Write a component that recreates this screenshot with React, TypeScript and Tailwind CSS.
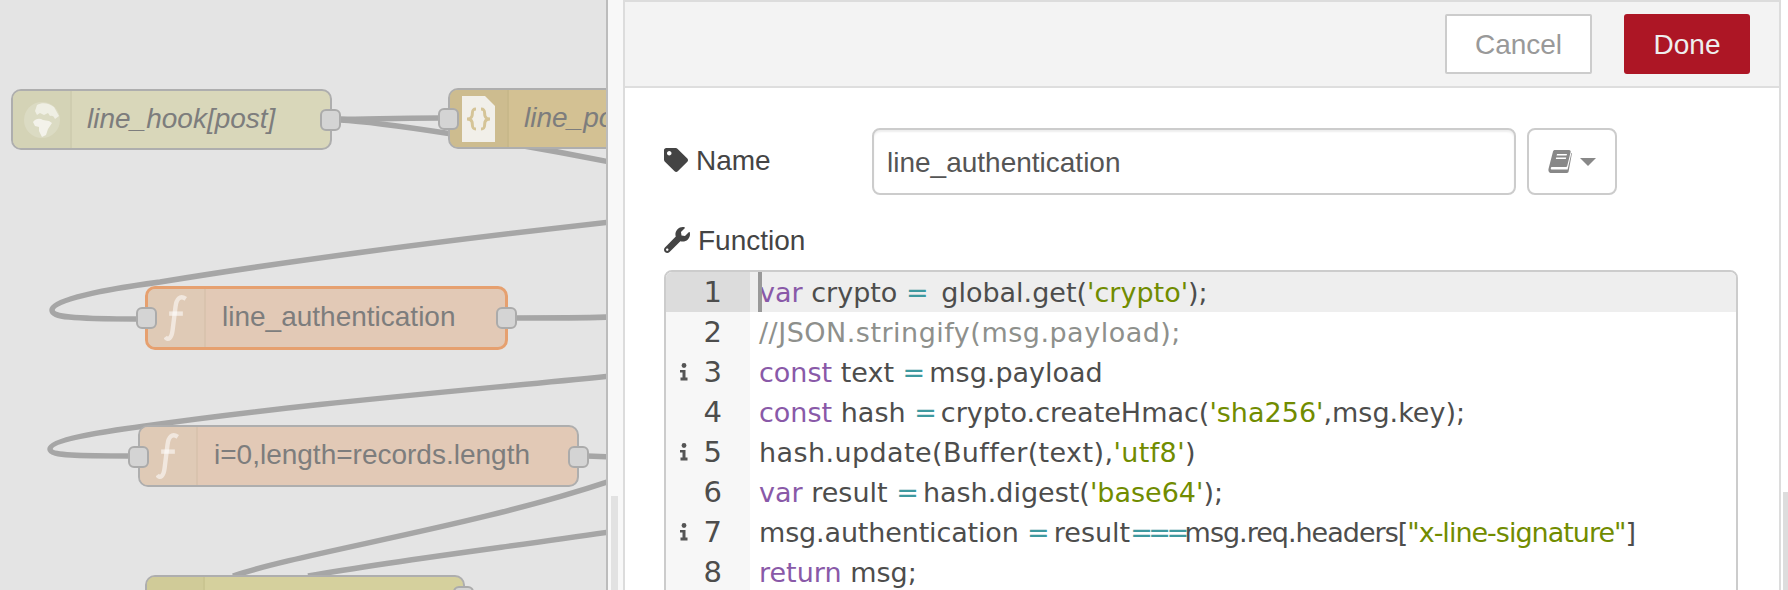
import { FaTag, FaWrench } from 'react-icons/fa'
import type { ReactNode } from 'react'

const SANS = "font-['Liberation_Sans',Arial,sans-serif]"

type Tok = [string, string?]

const KW = 'text-[#8959a8]'
const OP = 'text-[#3e999f] tracking-[-4.5px]'
const STR = 'text-[#718c00]'
const CMT = 'text-[#8e908c]'

const lines: { toks: Tok[]; info?: boolean; fit?: string }[] = [
  { toks: [['var', KW], [' crypto '], ['=', OP], ['  global.get('], ["'crypto'", STR], [');']] },
  { fit: 'tracking-[0.5px]', toks: [['//JSON.stringify(msg.payload);', CMT]] },
  { info: true, toks: [['const', KW], [' text '], ['=', OP], [' msg.payload']] },
  { toks: [['const', KW], [' hash '], ['=', OP], [' crypto.createHmac('], ["'sha256'", STR], [',msg.key);']] },
  { info: true, fit: 'tracking-[0.4px]', toks: [['hash.update(Buffer(text),'], ["'utf8'", STR], [')']] },
  { toks: [['var', KW], [' result '], ['=', OP], [' hash.digest('], ["'base64'", STR], [');']] },
  { info: true, toks: [['msg.authentication ', 'tracking-[-0.15px]'], ['=', OP], [' result'], ['===', OP], ['msg.req.headers[', 'tracking-[-1px]'], ['"x-line-signature"', `${STR} tracking-[-1px]`], [']']] },
  { toks: [['return', KW], [' msg;']] },
]

const FuncIcon = ({ className }: { className: string }) => (
  <svg viewBox="0 0 24 48" className={className} fill="none" stroke="#fff" strokeOpacity="0.55" strokeWidth="4.5">
    <path d="M22 4 C16 0 12.5 4 11.5 12 L8.5 36 C7.5 44 4 47 1 43" />
    <path d="M5 19 H19" />
  </svg>
)

const GlobeIcon = () => (
  <svg viewBox="0 0 36 36" className="w-[36px] h-[36px] blur-[0.5px]">
    <circle cx="18" cy="18" r="18" fill="#fff" fillOpacity="0.18" />
    <path d="M13 3 C18 0 25 1 30 5 L35 14 L31 17 C30 14 28 13 26 14 L24 11 L20 13 L16 11 L13 13 L11 9 Z" fill="#fff" fillOpacity="0.55" />
    <path d="M9 20 C12 16 16 16 19 18 L25 19 L28 21 L24 27 L22 33 L18 35 L15 29 L15 25 L11 24 Z" fill="#fff" fillOpacity="0.65" />
  </svg>
)

const FileIcon = () => (
  <svg viewBox="0 0 33 46" className="w-[33px] h-[46px]">
    <path d="M0 0 H23 L33 10 V46 H0 Z" fill="#f1efe9" />
    <path d="M14 13 C9 13 11 17 10 20 C9.5 22 7 23 5 23 C7 23 9.5 24 10 26 C11 29 9 33 14 33" fill="none" stroke="#d5c497" strokeWidth="3" />
    <path d="M19 13 C24 13 22 17 23 20 C23.5 22 26 23 28 23 C26 23 23.5 24 23 26 C22 29 24 33 19 33" fill="none" stroke="#d5c497" strokeWidth="3" />
  </svg>
)

const Port = ({ className }: { className: string }) => (
  <div className={`absolute w-[21px] h-[22px] bg-[#d4d4d4] border-2 border-[#ababab] rounded-[6px] ${className}`} />
)

function FlowNode({ box, fill, iconFill, line, iconW, pad, icon, label, italic, children }: {
  box: string
  fill: string
  iconFill: string
  line: string
  iconW: string
  pad: string
  icon: ReactNode
  label: string
  italic?: boolean
  children?: ReactNode
}) {
  return (
    <div className={`absolute flex rounded-[10px] border-2 ${box} ${fill}`}>
      <div className={`flex items-center justify-center shrink-0 border-r-2 rounded-l-[8px] ${iconW} ${iconFill} ${line}`}>{icon}</div>
      <div className={`${pad} pb-[2px] flex items-center whitespace-nowrap text-[28px] text-[#7d7d7d] ${italic ? 'italic' : ''}`}>{label}</div>
      {children}
    </div>
  )
}

const InfoIcon = () => (
  <svg viewBox="0 0 9 18" className="w-[9px] h-[18px] mr-[16px] blur-[0.6px]" fill="#555">
    <circle cx="5" cy="2.5" r="2.4" />
    <path d="M1 7 H6.5 V14.5 H8.5 V17.5 H1.5 V14.5 H3.5 V9.5 H1 Z" />
  </svg>
)

const BookIcon = () => (
  <svg viewBox="0 0 24 23" className="w-[24px] h-[23px]" fill="#888">
    <path d="M5 1.5 C5.3 .5 6 0 7 0 H21 C22.3 0 23 1 22.6 2.2 L19.2 16 C19 16.8 18.4 17 17.6 17 H4 C2.4 17 2.4 19.6 4 19.6 H19.6 L23.4 3 H24 L20.6 21.6 C20.4 22.6 19.8 23 19 23 H3.4 C1 23 0 20.6 .6 18.4 Z M9 4 L8.6 5.6 H18.6 L19 4 Z M8.2 7.4 L7.8 9 H17.8 L18.2 7.4 Z" fillRule="evenodd" />
  </svg>
)

export default function App() {
  return (
    <div className={`flex w-[1788px] h-[590px] overflow-hidden bg-[#fafafa] ${SANS}`}>
      {/* dimmed workspace behind the edit tray */}
      <div className="relative w-[606px] h-full shrink-0 overflow-hidden bg-[#e4e4e4]">
        <svg className="absolute inset-0 w-[606px] h-[590px]" viewBox="0 0 606 590" fill="none" stroke="#a6a6a6" strokeWidth="5.5">
          <path d="M340 120 C 380 122 500 140 610 162" />
          <path d="M340 119 C 370 120 380 118 440 118" />
          <path d="M136 319 C 70 319 52 317 52 310 C 52 300 100 290 160 282 C 300 259 450 240 610 222" />
          <path d="M515 318 C 550 318 580 318 610 317" />
          <path d="M128 456 C 80 456 50 456 50 449 C 50 440 100 432 145 426 C 300 404 450 392 610 376" />
          <path d="M587 456 L 610 457" />
          <path d="M233 576 C 300 553 480 525 610 481" />
          <path d="M308 576 C 400 560 500 548 610 532" />
        </svg>

        <FlowNode box="left-[11px] top-[89px] w-[321px] h-[61px] border-[#aeaeae]" fill="bg-[#d9d7ba]" iconFill="bg-[#d4d3b6]" line="border-[#cfcdb0]" iconW="w-[59px]" pad="pl-[15px]" icon={<GlobeIcon />} label="line_hook[post]" italic>
          <Port className="-right-[11px] top-[18px]" />
        </FlowNode>

        <FlowNode box="left-[448px] top-[88px] w-[320px] h-[61px] border-[#aeaeae]" fill="bg-[#d3c193]" iconFill="bg-[#cdbc8f]" line="border-[#c8b88a]" iconW="w-[59px]" pad="pl-[15px]" icon={<FileIcon />} label="line_post" italic>
          <Port className="-left-[12px] top-[18px]" />
        </FlowNode>

        <FlowNode box="left-[145px] top-[286px] w-[363px] h-[64px] border-[3px] border-[#e6a06f]" fill="bg-[#e2c9b6]" iconFill="bg-[#dfcab6]" line="border-[#d9c3ae]" iconW="w-[58px]" pad="pl-[16px]" icon={<FuncIcon className="w-[24px] h-[47px]" />} label="line_authentication">
          <Port className="-left-[12px] top-[18px]" />
          <Port className="-right-[12px] top-[18px]" />
        </FlowNode>

        <FlowNode box="left-[138px] top-[425px] w-[441px] h-[62px] border-[#aeaeae]" fill="bg-[#e2c9b6]" iconFill="bg-[#dfcab6]" line="border-[#d9c3ae]" iconW="w-[58px]" pad="pl-[16px]" icon={<FuncIcon className="w-[24px] h-[47px]" />} label="i=0,length=records.length">
          <Port className="-left-[12px] top-[19px]" />
          <Port className="-right-[12px] top-[19px]" />
        </FlowNode>

        <FlowNode box="left-[145px] top-[575px] w-[320px] h-[61px] border-[#aeaeae]" fill="bg-[#d5d09d]" iconFill="bg-[#d0cb98]" line="border-[#cac591]" iconW="w-[58px]" pad="pl-[16px]" icon={null} label="">
          <Port className="-right-[11px] top-[9px]" />
        </FlowNode>
      </div>

      {/* tray */}
      <div className="relative flex flex-1 min-w-0 border-l-2 border-[#bcbcbc]">
        <div className="w-[15px] shrink-0 bg-[#f8f8f8]" />
        <div className="w-[1158px] shrink-0 border-x-2 border-t-2 border-[#dcdcdc] bg-white">
          <div className="flex items-center justify-end gap-[32px] h-[84px] pr-[29px] bg-[#f3f3f3] border-b-2 border-[#dedede] box-content">
            <button className="w-[147px] h-[60px] pt-[2px] bg-white border-2 border-[#cccccc] text-[#999999] text-[28px] rounded-[2px]">Cancel</button>
            <button className="w-[126px] h-[60px] pt-[2px] bg-[#ad1625] text-[#eeeeee] text-[28px] rounded-[3px]">Done</button>
          </div>

          <div className="pl-[39px] pt-[40px]">
            <div className="flex items-center">
              <div className="flex items-center w-[208px] text-[28px] text-[#444444] -mt-[3px]">
                <FaTag className="w-[24px] h-[24px] mr-[8px] text-[#444444]" />
                <span className="pt-[2px]">Name</span>
              </div>
              <div className="flex items-center w-[644px] h-[67px] pl-[13px] pt-[3px] border-2 border-[#cccccc] rounded-[8px] shadow-[inset_0_2px_2px_rgba(0,0,0,0.07)] text-[28px] text-[#555555]">line_authentication</div>
              <div className="flex items-center justify-center gap-[8px] ml-[11px] w-[90px] h-[67px] border-2 border-[#cccccc] rounded-[8px]">
                <BookIcon />
                <div className="w-0 h-0 border-x-[8px] border-x-transparent border-t-[8px] border-t-[#888888]" />
              </div>
            </div>

            <div className="flex items-center h-[40px] mt-[25px] mb-[10px] text-[28px] text-[#444444]">
              <FaWrench className="w-[26px] h-[26px] mr-[8px] text-[#444444]" />
              <span className="pt-[2px]">Function</span>
            </div>

            <div className="w-[1074px] h-[400px] border-2 border-[#cccccc] rounded-[8px] overflow-hidden text-[#4d4d4c] text-[27px] font-['DejaVu_Sans',sans-serif]">
              {lines.map((l, i) => (
                <div key={i} className={`relative flex h-[40px] leading-[42px] ${i === 0 ? 'bg-[#eeeeee]' : ''}`}>
                  <div className={`flex items-center justify-end w-[84px] pr-[28px] shrink-0 text-[29px] ${i === 0 ? 'bg-[#dcdcdc]' : 'bg-[#f7f7f7]'}`}>
                    {l.info && <InfoIcon />}
                    {i + 1}
                  </div>
                  <div className={`pl-[9px] whitespace-pre ${l.fit ?? ''}`}>
                    {l.toks.map(([t, c], j) => <span key={j} className={c}>{t}</span>)}
                  </div>
                  {i === 0 && <div className="absolute left-[92px] top-0 w-[4px] h-[40px] bg-[#999999]" />}
                </div>
              ))}
            </div>
          </div>
        </div>
        <div className="flex-1 bg-white" />
        {/* scrollbars */}
        <div className="absolute left-[3px] top-[496px] bottom-0 w-[7px] bg-[#e2e2e2]" />
        <div className="absolute right-0 top-[492px] bottom-0 w-[5px] bg-[#dddddd]" />
      </div>
    </div>
  )
}
